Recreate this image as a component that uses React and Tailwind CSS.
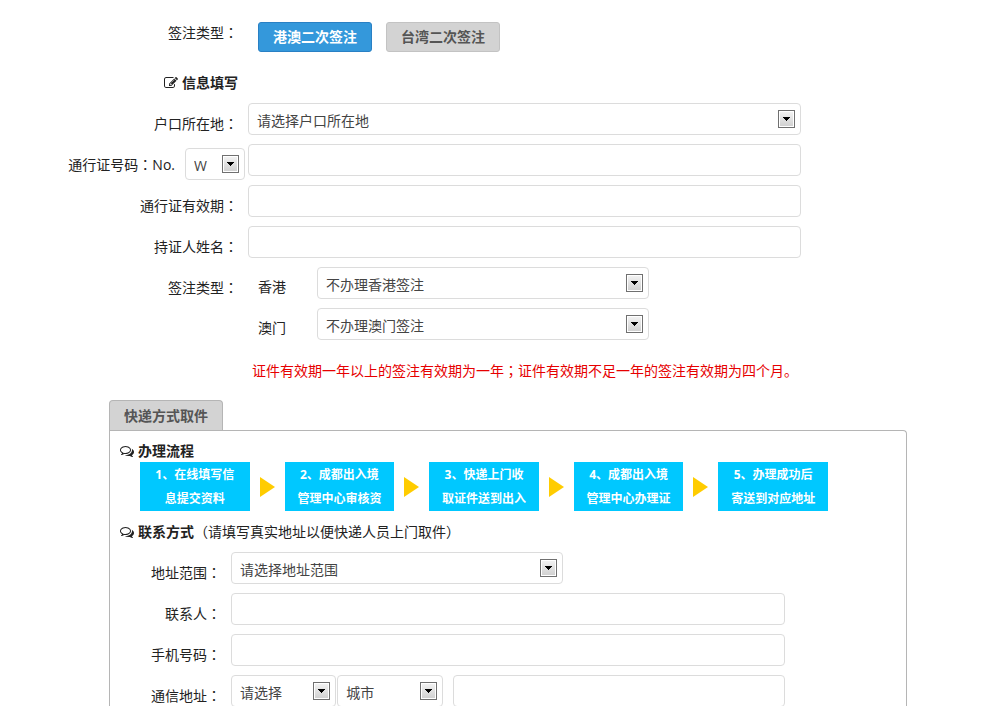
import { Fragment } from 'react'

const steps = [
  ['1、在线填写信', '息提交资料'],
  ['2、成都出入境', '管理中心审核资'],
  ['3、快递上门收', '取证件送到出入'],
  ['4、成都出入境', '管理中心办理证'],
  ['5、办理成功后', '寄送到对应地址'],
]

const inputClass = 'h-8 min-w-0 rounded border border-[#dcdcdc] bg-white px-2 text-[#555] outline-none focus:border-[#3498db]'

function EditIcon() {
  return (
    <svg width="14" height="14" viewBox="0 0 1792 1792" fill="currentColor" className="shrink-0" aria-hidden="true">
      <path d="M888 1184l116-116-152-152-116 116v56h96v96h56zm440-720q-16-16-33 1l-350 350q-17 17-1 33t33-1l350-350q17-17 1-33zm80 594v190q0 119-84.5 203.5t-203.5 84.5h-832q-119 0-203.5-84.5t-84.5-203.5v-832q0-119 84.5-203.5t203.5-84.5h832q63 0 117 25 15 7 18 23 3 17-9 29l-49 49q-14 14-32 8-23-6-45-6h-832q-66 0-113 47t-47 113v832q0 66 47 113t113 47h832q66 0 113-47t47-113v-126q0-13 9-22l64-64q15-15 35-7t20 29zm-96-738l288 288-672 672h-288v-288zm444 132l-92 92-288-288 92-92q28-28 68-28t68 28l152 152q28 28 28 68t-28 68z" />
    </svg>
  )
}

function CommentsIcon() {
  return (
    <svg width="14" height="14" viewBox="0 0 1792 1792" fill="currentColor" className="shrink-0" aria-hidden="true">
      <path d="M704 384q-153 0-286 52t-211.5 141-78.5 191q0 82 53 158t149 132l97 56-35 84q34-20 62-39l44-31 53 10q78 14 153 14 153 0 286-52t211.5-141 78.5-191-78.5-191-211.5-141-286-52zm0-128q191 0 353.5 68.5t256.5 186.5 94 257-94 257-256.5 186.5-353.5 68.5q-86 0-176-16-124 88-278 128-36 9-86 16h-3q-11 0-20.5-8t-11.5-21q-1-3-1-6.5t.5-6.5 2-6l2.5-5 3.5-5.5 4-5 4.5-5 4-4.5q5-6 23-25t26-29.5 22.5-29 25-38.5 20.5-44q-124-72-195-177t-71-224q0-139 94-257t256.5-186.5 353.5-68.5zm822 1169q10 24 20.5 44t25 38.5 22.5 29 26 29.5 23 25q1 1 4 4.5t4.5 5 4 5 3.5 5.5l2.5 5 2 6 .5 6.5-1 6.5q-3 14-13 22t-22 7q-50-7-86-16-154-40-278-128-90 16-176 16-271 0-472-132 58 4 88 4 161 0 309-45t264-129q125-92 192-212t67-254q0-77-23-152 129 71 204 178t75 230q0 120-71 224.5t-195 176.5z" />
    </svg>
  )
}

// centred full width punctuation
function Punct({ children }) {
  return <span className="font-['Noto_Sans_CJK_TC',sans-serif]">{children}</span>
}

function Select({ id, label, className, options }) {
  return (
    <div className={`relative ${className}`}>
      <select
        id={id}
        aria-label={label}
        className="block h-8 w-full appearance-none rounded border border-[#dcdcdc] bg-white pt-[3px] pr-6 pl-2 text-[#444] outline-none"
      >
        {options.map((o) => (
          <option key={o}>{o}</option>
        ))}
      </select>
      <span className="pointer-events-none absolute top-[7px] right-[6px] flex h-[18px] w-[17px] items-center justify-center border border-[#707070] bg-linear-to-b from-[#f4f4f4] to-[#cfcfcf] ring-1 ring-white ring-inset">
        <svg width="7" height="4" viewBox="0 0 7 4" shapeRendering="crispEdges">
          <path d="M0 0h7v1h-1v1h-1v1h-1v1h-1v-1h-1v-1h-1v-1h-1z" fill="#000" />
        </svg>
      </span>
    </div>
  )
}

function Row({ id, label, labelClass, children }) {
  return (
    <div className="mb-[9px] flex h-8">
      <label htmlFor={id} className={`mr-[10px] shrink-0 pt-2 text-right leading-6 ${labelClass}`}>
        {label}
        <Punct>：</Punct>
      </label>
      <div className="flex min-w-0 flex-1">{children}</div>
    </div>
  )
}

export default function App() {
  const top = 'w-[238px]'
  const inner = 'w-[111px]'
  return (
    <form className="flex h-screen flex-col overflow-hidden bg-white font-['Open_Sans','Noto_Sans_CJK_SC',sans-serif] text-sm text-[#222]">
      <div className="pr-[199px]">
        <div className="flex pt-[22px]">
          <span className="h-[30px] w-[238px] text-right leading-5">
            签注类型<Punct>：</Punct>
          </span>
          <div className="ml-5 flex gap-[14px]">
            <button type="button" className="h-[30px] rounded-[3px] border border-[#2980c4] bg-[#3498db] px-[14px] font-bold text-white">
              港澳二次签注
            </button>
            <button type="button" className="h-[30px] rounded-[3px] border border-[#c3c3c3] bg-[#d3d3d3] px-[14px] font-bold text-[#555]">
              台湾二次签注
            </button>
          </div>
        </div>

        <h2 className="mt-[19px] mb-[9px] flex h-[23px] w-[238px] items-center justify-end gap-1 font-bold leading-[23px]">
          <EditIcon />
          信息填写
        </h2>

        <Row id="hukou" label="户口所在地" labelClass={top}>
          <Select id="hukou" className="flex-1" options={['请选择户口所在地']} />
        </Row>
        <div className="mb-[9px] flex h-8">
          <div className="mr-[3px] flex h-8 w-[245px] shrink-0 justify-end">
            <label htmlFor="permit" className="mr-[10px] pt-2 leading-6 whitespace-nowrap">
              通行证号码<Punct>：</Punct>No.
            </label>
            <Select id="prefix" label="证件前缀" className="mt-1 w-[60px]" options={['W', 'C']} />
          </div>
          <input id="permit" type="text" className={`${inputClass} flex-1`} />
        </div>
        <Row id="expiry" label="通行证有效期" labelClass={top}>
          <input id="expiry" type="text" className={`${inputClass} flex-1`} />
        </Row>
        <Row id="holder" label="持证人姓名" labelClass={top}>
          <input id="holder" type="text" className={`${inputClass} flex-1`} />
        </Row>
        <Row id="hongkong" label="签注类型" labelClass={top}>
          <label htmlFor="hongkong" className="w-[69px] pt-2 pl-[10px] leading-6">香港</label>
          <Select id="hongkong" className="w-3/5" options={['不办理香港签注']} />
        </Row>
        <div className="flex h-8 pl-[248px]">
          <label htmlFor="macau" className="w-[69px] pt-2 pl-[10px] leading-6">澳门</label>
          <Select id="macau" className="w-3/5" options={['不办理澳门签注']} />
        </div>
        <p className="my-[18px] h-6 pl-[252px] leading-6 whitespace-nowrap text-[#e60000]">
          证件有效期一年以上的签注有效期为一年<Punct>；</Punct>证件有效期不足一年的签注有效期为四个月。
        </p>
      </div>

      <div className="mr-[93px] ml-[109px] flex flex-1 flex-col">
        <button type="button" className="h-[30px] shrink-0 self-start rounded-t border border-b-0 border-[#b5b5b5] bg-[#d3d3d3] px-[14px] font-bold text-[#555]">
          快递方式取件
        </button>
        <section className="flex-1 rounded-tr border border-b-0 border-[#b5b5b5] pt-2">
          <h2 className="flex h-[23px] items-center gap-1 pl-[10px] font-bold leading-[23px]">
            <CommentsIcon />
            办理流程
          </h2>
          <ol className="mr-[78px] ml-[30px] flex items-center text-xs font-bold leading-6 text-white">
            {steps.map(([a, b], i) => (
              <Fragment key={a}>
                {i > 0 && (
                  <li aria-hidden="true" className="shrink-0">
                    <svg width="35" height="20" viewBox="0 0 35 20" className="block">
                      <path d="M10 0l15 10-15 10z" fill="#fc0" />
                    </svg>
                  </li>
                )}
                <li className="h-[49px] flex-1 bg-[#00c8ff] pt-px text-center whitespace-nowrap">
                  <div>{a}</div>
                  <div>{b}</div>
                </li>
              </Fragment>
            ))}
          </ol>
          <h2 className="my-[9px] flex h-[23px] items-center pl-[10px] leading-[23px]">
            <CommentsIcon />
            <b className="ml-1">联系方式</b>（请填写真实地址以便快递人员上门取件）
          </h2>
          <div className="pr-[121px]">
            <Row id="range" label="地址范围" labelClass={inner}>
              <Select id="range" className="w-3/5" options={['请选择地址范围']} />
            </Row>
            <Row id="contact" label="联系人" labelClass={inner}>
              <input id="contact" type="text" className={`${inputClass} flex-1`} />
            </Row>
            <Row id="mobile" label="手机号码" labelClass={inner}>
              <input id="mobile" type="text" className={`${inputClass} flex-1`} />
            </Row>
            <Row id="address" label="通信地址" labelClass={inner}>
              <Select id="province" label="省份" className="mr-px w-[19%]" options={['请选择']} />
              <Select id="city" label="城市" className="mr-[10px] w-[19%]" options={['城市']} />
              <input id="address" type="text" className={`${inputClass} flex-1`} />
            </Row>
          </div>
        </section>
      </div>
    </form>
  )
}
